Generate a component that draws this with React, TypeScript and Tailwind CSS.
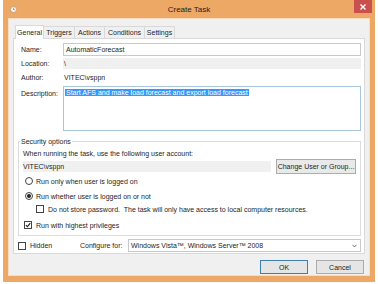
import type { ReactNode } from "react";

const font = { fontFamily: '"Liberation Sans", Arial, sans-serif' };

const Radio = ({ checked, children }: { checked?: boolean; children: ReactNode }) => (
  <div className="flex items-center h-[10px]">
    <span className="w-[8px] h-[8px] rounded-full border border-[#444] bg-white flex items-center justify-center">
      {checked && <span className="w-[4px] h-[4px] rounded-full bg-[#222]" />}
    </span>
    <span className="ml-[3px]">{children}</span>
  </div>
);

const Check = ({ checked, children }: { checked?: boolean; children: ReactNode }) => (
  <div className="flex items-center h-[10px]">
    <span className="w-[8px] h-[8px] border border-[#444] bg-white flex items-center justify-center">
      {checked && (
        <svg width="6" height="6" viewBox="0 0 6 6">
          <path d="M0.8 3.1 L2.4 4.7 L5.3 1.1" fill="none" stroke="#222" strokeWidth="1.1" />
        </svg>
      )}
    </span>
    <span className="ml-[4px]">{children}</span>
  </div>
);

const tabs = ["General", "Triggers", "Actions", "Conditions", "Settings"];
const tabWidths = ["w-[29px]", "w-[31px]", "w-[30px]", "w-[40px]", "w-[30px]"];

export default function App() {
  return (
    <div className="w-[378px] h-[284px] bg-white overflow-hidden text-[7px] text-[#1e1e1e] leading-[9px]" style={font}>
      <div className="ml-[3px] w-[372px] h-[282px] bg-[#eda866] flex flex-col">
        {/* Title bar */}
        <div className="h-[18px] flex items-start">
          <div className="w-[21px] pl-[7px] pt-[6px]">
            <svg width="7" height="7" viewBox="0 0 7 7">
              <circle cx="3.5" cy="3.5" r="3" fill="#f7f3ee" stroke="#b98a5a" strokeWidth="0.6" />
              <path d="M3.5 1.6 V3.6 H5" fill="none" stroke="#7a6a5a" strokeWidth="0.6" />
            </svg>
          </div>
          <div className="flex-1 text-center text-[8px] leading-[10px] pt-[5px] text-[#222]">Create Task</div>
          <div className="w-[21px] pr-[3px]">
            <div className="w-[18px] h-[13px] bg-[#c9504c] flex items-center justify-center">
              <svg width="6" height="6" viewBox="0 0 6 6">
                <path d="M0.5 0.5 L5.5 5.5 M5.5 0.5 L0.5 5.5" stroke="#fff" strokeWidth="1.4" />
              </svg>
            </div>
          </div>
        </div>

        {/* Client area */}
        <div className="mx-[5px] h-[258px] bg-[#f0f0f0] pl-[4px] pt-[5px] border border-[#f6dcc0]">
          {/* Tabs */}
          <div className="flex items-end h-[14px] pl-[2px]">
            {tabs.map((t, i) => (
              <div
                key={t}
                className={
                  i === 0
                    ? `${tabWidths[i]} h-[14px] bg-white border border-b-0 border-[#d9d9d9] flex items-center justify-center relative top-[1px] z-10`
                    : `${tabWidths[i]} h-[12px] bg-[#f0f0f0] border border-b-0 border-l-0 border-[#d9d9d9] flex items-center justify-center`
                }
              >
                {t}
              </div>
            ))}
          </div>

          {/* Tab panel */}
          <div className="w-[352px] h-[216px] bg-white border border-[#d9d9d9] pl-[7px] pr-[3px] pt-[4px]">
            <div className="flex items-center h-[13px]">
              <span className="w-[42px]">Name:</span>
              <div className="flex-1 h-[13px] border border-[#c9c9c9] flex items-center pl-[2px]">AutomaticForecast</div>
            </div>
            <div className="flex items-center h-[11px] mt-[2px]">
              <span className="w-[42px]">Location:</span>
              <div className="flex-1 h-[11px] bg-[#f0f0f0] flex items-center pl-[1px]">\</div>
            </div>
            <div className="flex items-center h-[10px] mt-[3px]">
              <span className="w-[42px]">Author:</span>
              <span className="pl-[1px]">VITEC\vsppn</span>
            </div>
            <div className="flex items-start mt-[4px]">
              <span className="w-[42px] pt-[3px]">Description:</span>
              <div className="flex-1 h-[45px] border border-[#a9c4e0] p-[1px]">
                <span className="bg-[#3399ff] text-white px-[1px]">
                  Start AFS and make load forecast and export load forecast
                </span>
              </div>
            </div>

            {/* Security options */}
            <div className="mt-[10px] ml-[-3px] mr-[0px] border border-[#dcdcdc] pl-[4px] pb-[5px] relative">
              <span className="absolute -top-[5px] left-[1px] bg-white px-[1px]">Security options</span>
              <div className="pt-[7px]">When running the task, use the following user account:</div>
              <div className="flex items-center h-[15px] mt-[1px]">
                <div className="w-[248px] h-[11px] bg-[#f0f0f0] flex items-center">VITEC\vsppn</div>
                <div className="ml-[5px] w-[80px] h-[15px] bg-[#e9e9e9] border border-[#acacac] flex items-center justify-center">
                  Change User or Group...
                </div>
              </div>
              <div className="mt-[2px] ml-[2px]">
                <Radio>Run only when user is logged on</Radio>
              </div>
              <div className="mt-[5px] ml-[2px]">
                <Radio checked>Run whether user is logged on or not</Radio>
              </div>
              <div className="mt-[3px] ml-[13px]">
                <Check>Do not store password.&nbsp; The task will only have access to local computer resources.</Check>
              </div>
              <div className="mt-[6px] ml-[1px]">
                <Check checked>Run with highest privileges</Check>
              </div>
            </div>

            <div className="flex items-center h-[13px] mt-[3px] ml-[-3px]">
              <div className="w-[62px]">
                <Check>Hidden</Check>
              </div>
              <span className="w-[48px]">Configure for:</span>
              <div className="flex-1 h-[13px] border border-[#c9c9c9] flex items-center justify-between pl-[2px] pr-[3px]">
                <span>Windows Vista™, Windows Server™ 2008</span>
                <svg width="5" height="4" viewBox="0 0 5 4">
                  <path d="M0.5 0.8 L2.5 3 L4.5 0.8" fill="none" stroke="#555" strokeWidth="0.8" />
                </svg>
              </div>
            </div>
          </div>

          {/* Buttons */}
          <div className="flex justify-end gap-[8px] mt-[6px] pr-[5px]">
            <div className="w-[48px] h-[14px] bg-[#e5e5e5] border border-[#3c7fb1] flex items-center justify-center">OK</div>
            <div className="w-[48px] h-[14px] bg-[#e5e5e5] border border-[#acacac] flex items-center justify-center">Cancel</div>
          </div>
        </div>
      </div>
    </div>
  );
}
